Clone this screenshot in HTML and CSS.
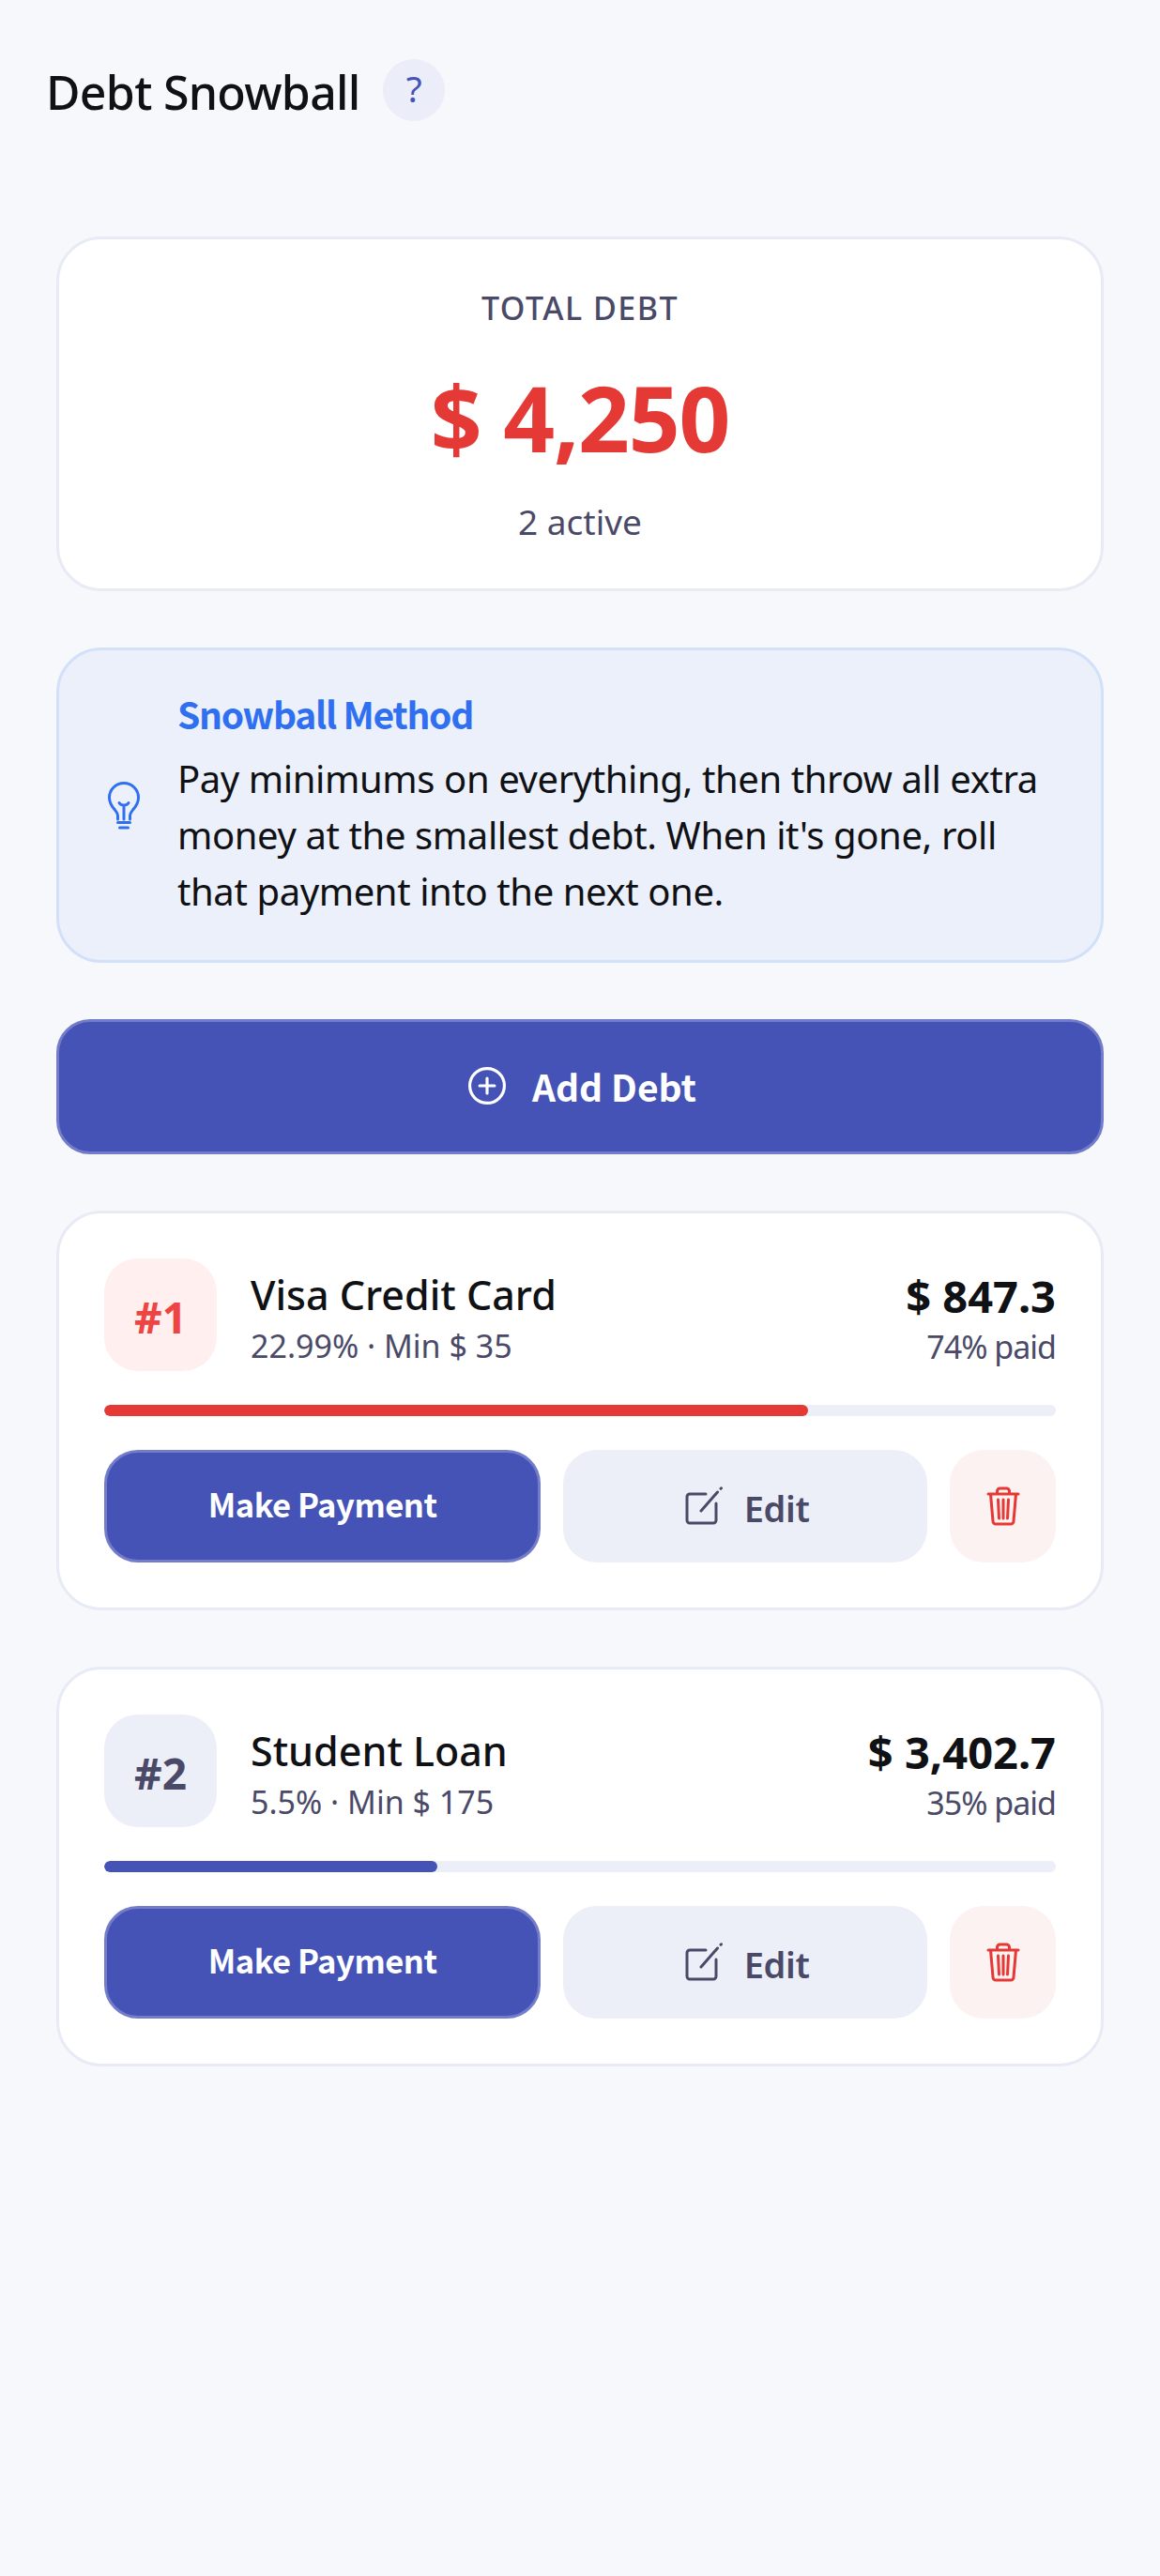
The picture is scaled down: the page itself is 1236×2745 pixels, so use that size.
FILE: index.html
```html
<!DOCTYPE html>
<html lang="en">
<head>
<meta charset="utf-8">
<title>Debt Snowball</title>
<link rel="stylesheet" href="styles.css">
</head>
<body>
<header class="topbar">
  <h1 class="page-title">Debt Snowball</h1>
  <button class="help">?</button>
</header>
<main class="content">
  <section class="card total">
    <div class="total-label">TOTAL DEBT</div>
    <div class="total-amount">$ 4,250</div>
    <div class="total-sub">2 active</div>
  </section>
  <section class="tip">
    <svg class="tip-icon" viewBox="0 0 34 51" fill="none" stroke="currentColor" stroke-width="3" stroke-linecap="round" stroke-linejoin="round">
      <path d="M10.500 40v-4c0-2.500-1.500-4-3.500-6.500C4 26 1.500 23 1.500 17a15.500 15.500 0 0 1 31 0c0 6-2.500 9-5.500 12.500-2 2.500-3.500 4-3.500 6.500v4"/>
      <path d="M12 22.500c1 1.500 3 2.500 5 2.500s4-1 5-2.500M17 25v15"/>
      <path d="M10.500 43.500h13M12.500 49h9"/>
    </svg>
    <div class="tip-text">
      <div class="tip-title">Snowball Method</div>
      <p class="tip-body">Pay minimums on everything, then throw all extra money at the smallest debt. When it's gone, roll that payment into the next one.</p>
    </div>
  </section>
  <button class="add">
    <svg class="add-icon" viewBox="0 0 38 38" fill="none" stroke="currentColor" stroke-width="3" stroke-linecap="round"><circle cx="19" cy="19" r="17.500"/><path d="M19 11.500v15M11.500 19h15"/></svg>
    <span>Add Debt</span>
  </button>
  <article class="card debt">
    <div class="debt-head">
      <div class="rank rank-first">#1</div>
      <div class="debt-info">
        <div class="debt-name">Visa Credit Card</div>
        <div class="debt-sub">22.99% · Min $ 35</div>
      </div>
      <div class="debt-figures">
        <div class="debt-amount">$ 847.3</div>
        <div class="debt-sub debt-paid">74% paid</div>
      </div>
    </div>
    <div class="track"><div class="fill fill-red" style="width:74%"></div></div>
    <div class="actions">
      <button class="pay">Make Payment</button>
      <button class="edit">
        <svg class="edit-icon" viewBox="0 0 40 42" fill="none" stroke="currentColor" stroke-width="3" stroke-linecap="round" stroke-linejoin="round"><path d="M22 8H5a3 3 0 0 0-3 3v25a3 3 0 0 0 3 3h25a3 3 0 0 0 3-3V18"/><path d="M17 26 34.500 6M38.500 1.800l-.5.500"/></svg>
        <span class="edit-label">Edit</span>
      </button>
      <button class="remove">
        <svg class="trash-icon" viewBox="0 0 36 42" fill="none" stroke="currentColor" stroke-width="3" stroke-linecap="round" stroke-linejoin="round"><path d="M2 8h32M4.500 8l2.500 29a3 3 0 0 0 3 3h16a3 3 0 0 0 3-3l2.500-29M11.500 8V5a3 3 0 0 1 3-3h7a3 3 0 0 1 3 3v3M12.500 14l1 20M18 14v20M23.500 14l-1 20"/></svg>
      </button>
    </div>
  </article>
  <article class="card debt">
    <div class="debt-head">
      <div class="rank">#2</div>
      <div class="debt-info">
        <div class="debt-name">Student Loan</div>
        <div class="debt-sub">5.5% · Min $ 175</div>
      </div>
      <div class="debt-figures">
        <div class="debt-amount">$ 3,402.7</div>
        <div class="debt-sub debt-paid">35% paid</div>
      </div>
    </div>
    <div class="track"><div class="fill" style="width:35%"></div></div>
    <div class="actions">
      <button class="pay">Make Payment</button>
      <button class="edit">
        <svg class="edit-icon" viewBox="0 0 40 42" fill="none" stroke="currentColor" stroke-width="3" stroke-linecap="round" stroke-linejoin="round"><path d="M22 8H5a3 3 0 0 0-3 3v25a3 3 0 0 0 3 3h25a3 3 0 0 0 3-3V18"/><path d="M17 26 34.500 6M38.500 1.800l-.5.500"/></svg>
        <span class="edit-label">Edit</span>
      </button>
      <button class="remove">
        <svg class="trash-icon" viewBox="0 0 36 42" fill="none" stroke="currentColor" stroke-width="3" stroke-linecap="round" stroke-linejoin="round"><path d="M2 8h32M4.500 8l2.500 29a3 3 0 0 0 3 3h16a3 3 0 0 0 3-3l2.500-29M11.500 8V5a3 3 0 0 1 3-3h7a3 3 0 0 1 3 3v3M12.500 14l1 20M18 14v20M23.500 14l-1 20"/></svg>
      </button>
    </div>
  </article>
</main>
</body>
</html>
```
FILE: styles.css
```css
* { box-sizing: border-box; }
html, body { margin: 0; }
body {
  min-height: 2745px;
  background: #f7f8fc;
  color: #0f1115;
  font-family: "Noto Sans", sans-serif;
}
button { font-family: inherit; cursor: pointer; }
.topbar {
  display: flex;
  align-items: center;
  gap: 24px;
  height: 192px;
  padding: 0 49px;
}
.page-title { margin: 4px 0 0; font-size: 50px; font-weight: 500; line-height: 1; letter-spacing: -0.700px; }
.help {
  width: 66px; height: 66px; padding: 0 0 6px 1px;
  border: 0; border-radius: 50%;
  background: #ebedf8; color: #4553b7;
  font-size: 39px; line-height: 1;
}
.content {
  display: flex;
  flex-direction: column;
  gap: 60px;
  padding: 60px 60px 0;
}
.card {
  background: #fff;
  border: 3px solid #e8eaf6;
  border-radius: 48px;
}
.total {
  height: 378px;
  display: flex;
  flex-direction: column;
  align-items: center;
  padding-top: 48px;
}
.total-label { font-size: 34px; font-weight: 500; letter-spacing: 1.500px; color: #4a4a68; line-height: 50px; }
.total-amount { font-size: 96px; font-weight: 700; color: #e53935; line-height: 110px; margin-top: 37px; letter-spacing: -1.200px; }
.total-sub { font-size: 37px; color: #4a4a68; line-height: 50px; margin-top: 31px; }
.tip {
  height: 336px;
  display: flex;
  align-items: center;
  gap: 40px;
  padding: 0 46px 0 52px;
  background: #ebf0fb;
  border: 3px solid #d3e0f9;
  border-radius: 48px;
}
.tip-icon { flex: none; width: 34px; height: 51px; color: #3070f0; }
.tip-text { padding-bottom: 6px; }
.tip-title { font-family: "Noto Sans CJK SC", sans-serif; font-size: 39px; font-weight: 700; color: #3070f0; line-height: 60px; letter-spacing: -1.300px; margin-bottom: 10px; }
.tip-body { margin: 0; font-size: 40px; line-height: 60px; letter-spacing: -0.400px; }
.add {
  display: flex;
  align-items: center;
  justify-content: center;
  gap: 28px;
  height: 144px;
  padding: 0 0 3px 5px;
  background: #4553b7;
  border: 3px solid #727cc8;
  border-radius: 36px;
  color: #fff;
  font-family: "Noto Sans CJK SC", sans-serif;
  font-size: 39px;
  font-weight: 700;
}
.add-icon { width: 40px; height: 40px; }
.debt { height: 426px; padding: 48px 48px 0; }
.debt-head { display: flex; align-items: center; gap: 36px; }
.rank {
  flex: none;
  width: 120px; height: 120px;
  display: flex; align-items: center; justify-content: center;
  padding-top: 4px;
  border-radius: 36px;
  background: #eceef8;
  color: #4a4a68;
  font-size: 46px; font-weight: 700;
}
.rank-first { background: #ffefef; color: #ef4444; }
.debt-info { flex: 1; min-width: 0; padding-top: 6px; }
.debt-name { font-size: 43px; font-weight: 500; line-height: 56px; }
.debt-sub { font-size: 34px; color: #4a4a68; line-height: 44px; margin-top: 4px; }
.debt-figures { text-align: right; padding-top: 7px; }
.debt-amount { font-size: 47px; font-weight: 700; line-height: 56px; }
.debt-paid { letter-spacing: -1px; }
.track { height: 12px; margin-top: 36px; border-radius: 6px; background: #eceef8; overflow: hidden; }
.fill { height: 100%; border-radius: 6px; background: #4553b7; }
.fill-red { background: #e53935; }
.actions { display: grid; grid-template-columns: 1.2fr 1fr 113px; gap: 24px; margin-top: 36px; height: 120px; }
.pay {
  border: 3px solid #727cc8;
  border-radius: 36px;
  background: #4553b7;
  color: #fff;
  font-family: "Noto Sans CJK SC", sans-serif;
  font-size: 34.600px; font-weight: 700;
  letter-spacing: -0.500px;
  padding: 0 0 6px;
}
.edit {
  display: flex; align-items: center; justify-content: center; gap: 23px;
  border: 0; border-radius: 36px;
  background: #eceef8;
  color: #4a4a68;
  font-size: 38px; font-weight: 600;
  letter-spacing: -0.300px;
  padding: 0 0 0 4px;
}
.edit-label { padding-top: 3px; }
.edit-icon { width: 40px; height: 42px; }
.remove {
  display: flex; align-items: center; justify-content: center;
  border: 0; border-radius: 36px;
  background: #fdf2f2;
  color: #e53935;
  padding: 0;
}
.trash-icon { width: 36px; height: 42px; }
```
